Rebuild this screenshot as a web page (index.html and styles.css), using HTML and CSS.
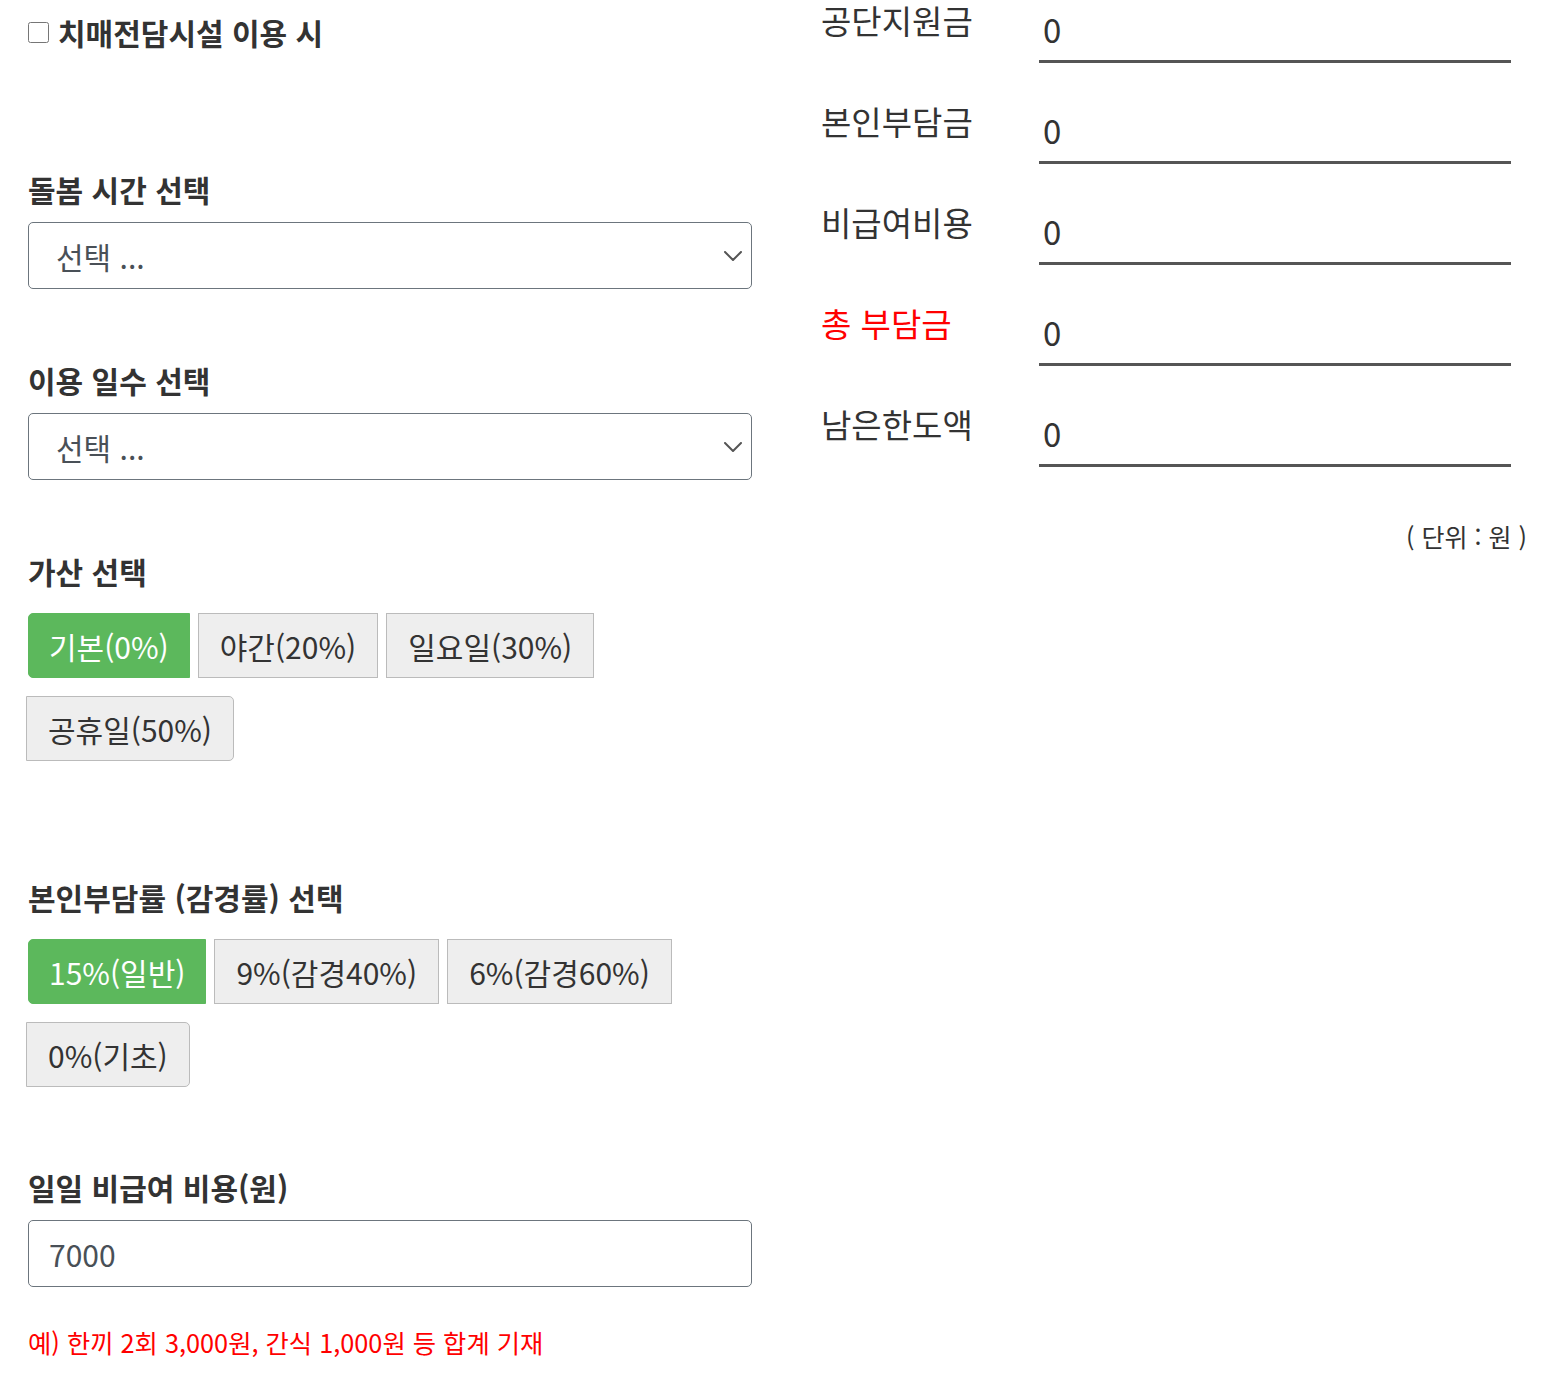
FILE: index.html
```html
<!DOCTYPE html>
<html lang="ko">
<head>
    <meta charset="UTF-8">
    <meta name="viewport" content="width=device-width, initial-scale=1.0">
    <title>장기요양 본인부담금 계산</title>
    <link rel="stylesheet" href="styles.css">
</head>
<body>
    <div class="calc">
        <div class="calc-form">
            <label class="check-row">
                <input type="checkbox" id="dementia">
                <span>치매전담시설 이용 시</span>
            </label>

            <div class="field first">
                <h4 class="field-title">돌봄 시간 선택</h4>
                <div class="select-box">
                    <span>선택 ...</span>
                    <svg class="chevron" viewBox="0 0 18 10" width="18" height="10"><path d="M1 1l8 8 8-8" fill="none" stroke="#555" stroke-width="2" stroke-linecap="round" stroke-linejoin="round"/></svg>
                </div>
            </div>

            <div class="field">
                <h4 class="field-title">이용 일수 선택</h4>
                <div class="select-box">
                    <span>선택 ...</span>
                    <svg class="chevron" viewBox="0 0 18 10" width="18" height="10"><path d="M1 1l8 8 8-8" fill="none" stroke="#555" stroke-width="2" stroke-linecap="round" stroke-linejoin="round"/></svg>
                </div>
            </div>

            <div class="field">
                <h4 class="field-title">가산 선택</h4>
                <div class="btn-group">
                    <button class="opt active">기본(0%)</button>
                    <button class="opt">야간(20%)</button>
                    <button class="opt">일요일(30%)</button>
                    <button class="opt last">공휴일(50%)</button>
                </div>
            </div>

            <div class="field rate">
                <h4 class="field-title">본인부담률 (감경률) 선택</h4>
                <div class="btn-group">
                    <button class="opt active">15%(일반)</button>
                    <button class="opt">9%(감경40%)</button>
                    <button class="opt">6%(감경60%)</button>
                    <button class="opt last">0%(기초)</button>
                </div>
            </div>

            <div class="field cost">
                <h4 class="field-title">일일 비급여 비용(원)</h4>
                <input type="text" class="text-input" value="7000">
                <p class="note">예) 한끼 2회 3,000원, 간식 1,000원 등 합계 기재</p>
            </div>
        </div>

        <div class="calc-result">
            <div class="result-row">
                <span class="result-label">공단지원금</span>
                <span class="result-value">0</span>
            </div>
            <div class="result-row">
                <span class="result-label">본인부담금</span>
                <span class="result-value">0</span>
            </div>
            <div class="result-row">
                <span class="result-label">비급여비용</span>
                <span class="result-value">0</span>
            </div>
            <div class="result-row">
                <span class="result-label total">총 부담금</span>
                <span class="result-value">0</span>
            </div>
            <div class="result-row">
                <span class="result-label">남은한도액</span>
                <span class="result-value">0</span>
            </div>
            <p class="unit">( 단위 : 원 )</p>
        </div>
    </div>
</body>
</html>
```

FILE: styles.css
```css
body {
    margin: 0;
    font-family: "Noto Sans CJK KR", "Noto Sans", sans-serif;
    color: #333;
    background: #fff;
}
.calc {
    display: flex;
    padding: 0 28px;
}
.calc-form {
    width: 724px;
}
.calc-result {
    width: 706px;
    margin-left: 69px;
}

/* left form */
.check-row {
    display: flex;
    align-items: center;
    height: 64px;
    font-size: 30px;
    font-weight: bold;
    color: #333;
}
.check-row input {
    width: 21px;
    height: 21px;
    margin: 0 9px 0 0;
}
.field {
    margin-top: 68px;
}
.field.first {
    margin-top: 102px;
}
.field.rate {
    margin-top: 113px;
}
.field.cost {
    margin-top: 77px;
}
.field-title {
    margin: 0 0 12px;
    font-size: 30px;
    line-height: 46px;
    font-weight: bold;
    color: #333;
}
.field-title + .select-box,
.field-title + .text-input {
    margin-top: -2px;
}
.select-box {
    display: flex;
    align-items: center;
    justify-content: space-between;
    height: 65px;
    padding: 0 9px 0 27px;
    border: 1px solid #6c757d;
    border-radius: 5px;
    font-size: 30px;
    color: #495057;
}
.btn-group {
    display: flex;
    flex-wrap: wrap;
    gap: 18px 8px;
    margin-top: 19px;
}
.opt {
    height: 65px;
    padding: 0 21px;
    border: 1px solid #bbb;
    border-radius: 0;
    background: #eee;
    color: #333;
    font-family: inherit;
    font-size: 30px;
    cursor: pointer;
}
.opt.active {
    padding: 0 20px;
    background: #5cb85c;
    border-color: #5cb85c;
    color: #fff;
    border-radius: 5px 0 0 5px;
}
.opt.last {
    margin-left: -2px;
    border-radius: 0 5px 5px 0;
}
.text-input {
    display: block;
    width: 100%;
    height: 67px;
    box-sizing: border-box;
    padding: 0 20px;
    border: 1px solid #6c757d;
    border-radius: 5px;
    font-family: inherit;
    font-size: 30px;
    color: #495057;
}
.note {
    margin: 37px 0 0;
    font-size: 25.3px;
    color: #f00;
}

/* right result */
.result-row {
    display: flex;
    height: 101px;
}
.result-label {
    width: 218px;
    font-size: 33px;
    line-height: 40px;
    color: #333;
}
.result-label.total {
    color: #f00;
}
.result-value {
    flex: 1;
    height: 58px;
    margin: 2px 16px 0 0;
    padding-left: 4px;
    border-bottom: 3px solid #555;
    font-size: 33px;
    line-height: 54px;
    color: #333;
}
.unit {
    margin: 13px 0 0;
    text-align: right;
    font-size: 25px;
    color: #333;
}
```
